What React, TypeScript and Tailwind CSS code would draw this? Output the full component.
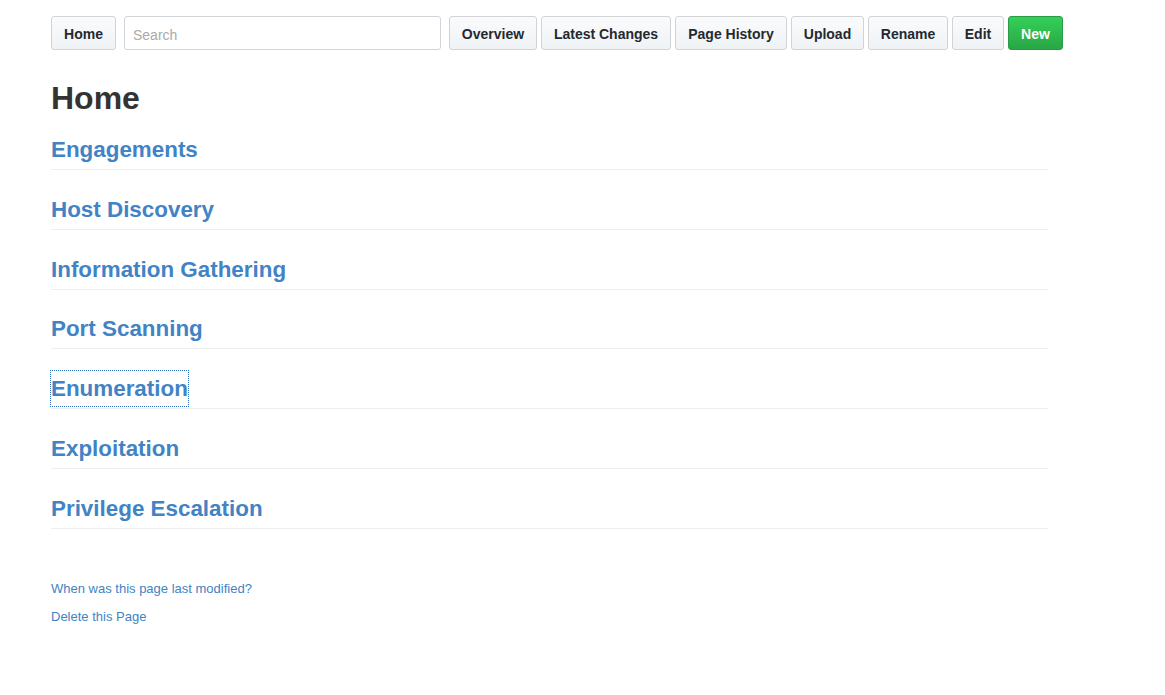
const sections = [
  "Engagements",
  "Host Discovery",
  "Information Gathering",
  "Port Scanning",
  "Enumeration",
  "Exploitation",
  "Privilege Escalation",
];

const actions: [string, string][] = [
  ["Overview", "w-[88px]"],
  ["Latest Changes", "w-[130px]"],
  ["Page History", "w-[112px]"],
  ["Upload", "w-[73px]"],
  ["Rename", "w-[80px]"],
  ["Edit", "w-[52px]"],
];

const btn =
  "h-[34px] pt-[7px] pb-[5px] rounded-[3px] border border-[#d1d3d5] bg-gradient-to-b from-[#fafbfc] to-[#eff3f6] text-[14px] font-bold leading-[20px] text-[#24292e] whitespace-nowrap text-center";

export default function App() {
  return (
    <div className="min-h-screen bg-white font-['Liberation_Sans',Arial,sans-serif]">
      <div className="ml-[51px] w-[997px]">
        {/* toolbar */}
        <div className="flex items-center pt-[16px] w-[1020px]">
          <button className={btn + " w-[65px]"}>Home</button>
          <input
            placeholder="Search"
            className="ml-[8px] h-[34px] w-[317px] rounded-[3px] border border-[#d1d5da] px-[8px] pt-[3px] text-[14px] text-[#24292e] placeholder:text-[#aaaaaa] outline-none"
          />
          <div className="ml-[8px] flex gap-[4px]">
            {actions.map(([a, w]) => (
              <button key={a} className={btn + " " + w}>
                {a}
              </button>
            ))}
            <button className="h-[34px] w-[55px] pt-[7px] pb-[5px] rounded-[3px] border border-[#2a9c46] bg-gradient-to-b from-[#34d058] to-[#28a745] text-[14px] font-bold leading-[20px] text-white">
              New
            </button>
          </div>
        </div>

        <h1 className="mt-[29px] text-[32px] font-bold leading-[38px] text-[#333333]">Home</h1>

        <div className="mt-[15px]">
          {sections.map((s) => (
            <h2 key={s} className="mb-[21.83px] border-b border-[#eeeeee] pb-[2.4px] text-[22.4px] font-bold">
              <a
                href="#"
                className={
                  "inline-block pt-[1px] leading-[33.6px] text-[#4183c4] " +
                  (s === "Enumeration" ? "outline outline-dotted outline-[#2f6fc0]" : "")
                }
              >
                {s}
              </a>
            </h2>
          ))}
        </div>

        <div className="mt-[46.5px] text-[13px] leading-[28px] text-[#4183c4]">
          <a href="#" className="block w-fit">
            When was this page last modified?
          </a>
          <a href="#" className="block w-fit">
            Delete this Page
          </a>
        </div>
      </div>
    </div>
  );
}
